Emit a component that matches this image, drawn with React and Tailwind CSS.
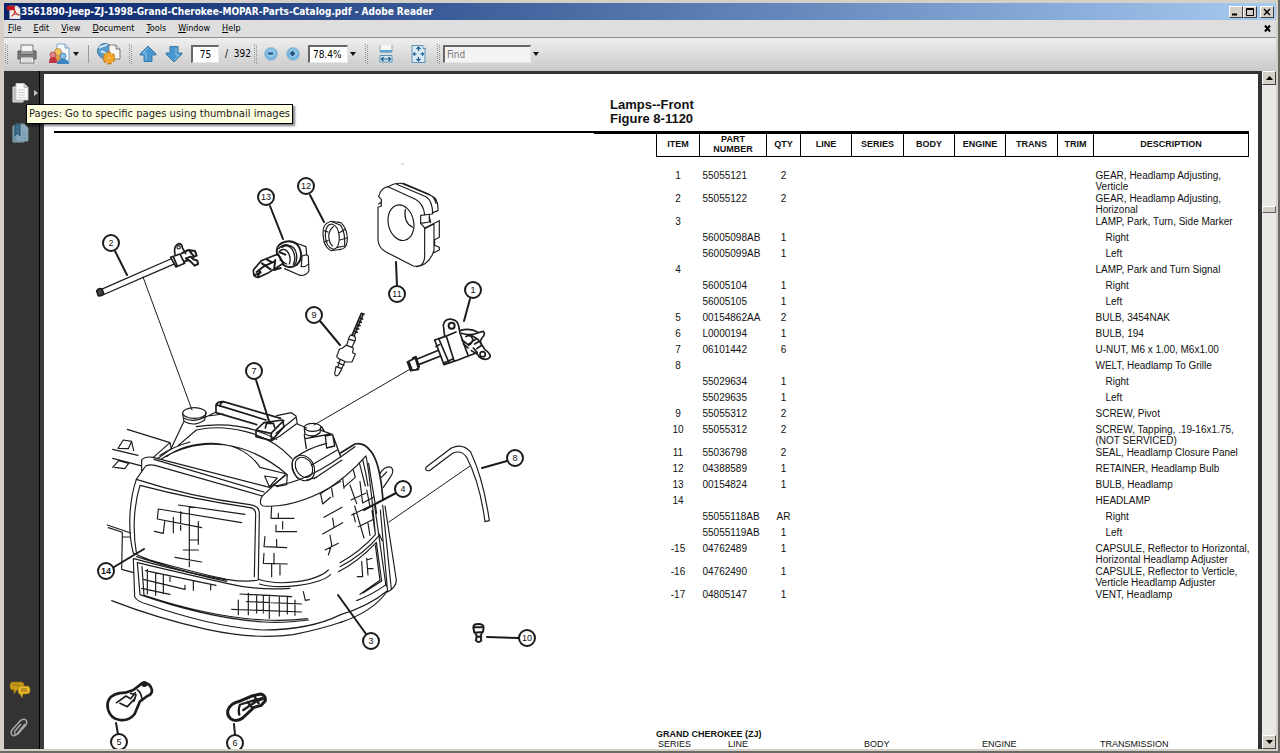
import React, { useState } from 'react';

const FILE_NAME = '3561890-Jeep-ZJ-1998-Grand-Cherokee-MOPAR-Parts-Catalog.pdf';
const TOTAL_PAGES = 392;

const menus = ['File', 'Edit', 'View', 'Document', 'Tools', 'Window', 'Help'];

const columns = [
  { label: 'ITEM', width: 'w-[43px]' },
  { label: 'PART NUMBER', width: 'w-[67px]' },
  { label: 'QTY', width: 'w-[34px]' },
  { label: 'LINE', width: 'w-[51px]' },
  { label: 'SERIES', width: 'w-[52px]' },
  { label: 'BODY', width: 'w-[51px]' },
  { label: 'ENGINE', width: 'w-[51px]' },
  { label: 'TRANS', width: 'w-[52px]' },
  { label: 'TRIM', width: 'w-[36px]' },
  { label: 'DESCRIPTION', width: '' },
];

// item, part number, qty, description lines, indented
const parts = [
  ['1', '55055121', '2', ['GEAR, Headlamp Adjusting,', 'Verticle']],
  ['2', '55055122', '2', ['GEAR, Headlamp Adjusting,', 'Horizonal']],
  ['3', '', '', ['LAMP, Park, Turn, Side Marker']],
  ['', '56005098AB', '1', ['Right'], true],
  ['', '56005099AB', '1', ['Left'], true],
  ['4', '', '', ['LAMP, Park and Turn Signal']],
  ['', '56005104', '1', ['Right'], true],
  ['', '56005105', '1', ['Left'], true],
  ['5', '00154862AA', '2', ['BULB, 3454NAK']],
  ['6', 'L0000194', '1', ['BULB, 194']],
  ['7', '06101442', '6', ['U-NUT, M6 x 1.00, M6x1.00']],
  ['8', '', '', ['WELT, Headlamp To Grille']],
  ['', '55029634', '1', ['Right'], true],
  ['', '55029635', '1', ['Left'], true],
  ['9', '55055312', '2', ['SCREW, Pivot']],
  ['10', '55055312', '2', ['SCREW, Tapping, .19-16x1.75,', '(NOT SERVICED)']],
  ['11', '55036798', '2', ['SEAL, Headlamp Closure Panel']],
  ['12', '04388589', '1', ['RETAINER, Headlamp Bulb']],
  ['13', '00154824', '1', ['BULB, Headlamp']],
  ['14', '', '', ['HEADLAMP']],
  ['', '55055118AB', 'AR', ['Right'], true],
  ['', '55055119AB', '1', ['Left'], true],
  ['-15', '04762489', '1', ['CAPSULE, Reflector to Horizontal,', 'Horizontal Headlamp Adjuster']],
  ['-16', '04762490', '1', ['CAPSULE, Reflector to Verticle,', 'Verticle Headlamp Adjuster']],
  ['-17', '04805147', '1', ['VENT, Headlamp']],
];

// number, centre x, centre y, leader line
const callouts = [
  ['2', 111, 243, 'M115 251L127 275'],
  ['13', 266, 197, 'M270 206L283 239'],
  ['12', 306, 186, 'M310 195L324 222'],
  ['11', 397, 294, 'M396 262L397 286'],
  ['1', 473, 290, 'M470 299L464 321'],
  ['9', 314, 315, 'M320 321L340 345'],
  ['7', 254, 371, 'M256 380L269 421'],
  ['8', 515, 458, 'M482 468L507 461'],
  ['4', 403, 489, 'M364 510L396 493'],
  ['14', 106, 571, 'M114 567L144 549'],
  ['3', 371, 641, 'M338 595L366 634'],
  ['10', 527, 638, 'M487 637L519 638'],
  ['5', 119, 742, 'M116 723L118 734'],
  ['6', 235, 743, 'M234 724L235 735'],
];

function Grip() {
  return (
    <svg className="h-5 w-1 shrink-0" viewBox="0 0 4 20" aria-hidden="true">
      <path d="M.5 0v20M2.500 1v19" stroke="#8f8f8f" strokeDasharray="1 1" />
    </svg>
  );
}

function DownArrow() {
  return (
    <svg className="h-1 w-[7px] shrink-0" viewBox="0 0 7 4" aria-hidden="true">
      <path d="M0 0h6L3 4z" fill="#111" />
    </svg>
  );
}

function PdfIcon() {
  return (
    <svg className="h-[14px] w-[14px] shrink-0" viewBox="0 0 16 16" aria-hidden="true">
      <path d="M3 1h9l3 3v12H3z" fill="#f4f1f1" stroke="#b9b4b4" strokeWidth=".6" />
      <path d="M12 1v3h3z" fill="#c9c4c4" />
      <path d="M0 1h9v5H0z" fill="#c8151b" />
      <path d="M5 13c3-2 4-5 4-7.500M6 12c2-2 5-2 8-1M9 7c1 3 3 4 5 5" fill="none" stroke="#d42a2a" strokeWidth="1.200" />
    </svg>
  );
}

function PrinterIcon() {
  return (
    <svg className="h-5 w-5" viewBox="0 0 20 20">
      <path d="M4 1h12v7H4z" fill="#f2f2f2" stroke="#777" />
      <path d="M1 7h3v3h12V7h3v8H1z" fill="#7a7a7a" stroke="#555" />
      <path d="M4 7h12v3H4z" fill="#9b9b9b" />
      <path d="M4 13h12l1 6H3z" fill="#fff" stroke="#777" />
      <path d="M5 15h10M5 17h10" stroke="#bbb" />
    </svg>
  );
}

function ShareIcon() {
  return (
    <svg className="h-[22px] w-[22px]" viewBox="0 0 22 22">
      <path d="M8 1h8l4 4v14H8z" fill="#f5f8fb" stroke="#7fa3c4" />
      <path d="M16 1v4h4" fill="#cfdfee" stroke="#7fa3c4" />
      <circle cx="9" cy="9" r="3.500" fill="#f2c65c" stroke="#b5762b" strokeWidth=".7" />
      <path d="M5 19c0-5 1-7 4-7s5 2 5 7z" fill="#e29b45" />
      <circle cx="4" cy="12" r="3" fill="#e58a86" stroke="#a2373f" strokeWidth=".7" />
      <path d="M0 20c0-4 1-6 4-6s4 2 4 6z" fill="#bf3445" />
      <circle cx="14" cy="13" r="3" fill="#8fc4ea" stroke="#2a6aa5" strokeWidth=".7" />
      <path d="M8 21c0-3 2-5 6-5s6 2 6 5z" fill="#3b85c0" />
    </svg>
  );
}

function OnlineIcon() {
  return (
    <svg className="h-[22px] w-6" viewBox="0 0 24 22">
      <circle cx="8" cy="8" r="7.500" fill="#5a9bd0" stroke="#356f9f" />
      <path d="M2 5c3-3 6-1 8-4M4 9c2-1 4 0 5 3l-2 3" fill="none" stroke="#cfe6f7" strokeWidth="2" />
      <path d="M12 2h7l4 4v10H12z" fill="#f7f7f7" stroke="#777" />
      <path d="M19 2v4h4" fill="#ddd" stroke="#777" />
      <circle cx="12" cy="15" r="4" fill="none" stroke="#c9811c" strokeWidth="5" strokeDasharray="3 1.200" />
      <circle cx="12" cy="15" r="3" fill="#fbd07a" stroke="#f2a62c" strokeWidth="4" />
    </svg>
  );
}

function PageArrow({ down }) {
  return (
    <svg className={`h-[18px] w-[18px] ${down ? 'rotate-180' : ''}`} viewBox="0 0 18 18">
      <path d="M9 1l8 8v1h-4v6.500H5V10H1V9z" fill="#4a97cf" stroke="#3a7ba8" strokeLinejoin="round" />
      <path d="M9 2.500L4 8h3v7" fill="none" stroke="#8cc4ea" />
    </svg>
  );
}

function ZoomIcon({ plus }) {
  return (
    <svg className="h-[14px] w-[14px]" viewBox="0 0 14 14">
      <circle cx="7" cy="7" r="6.500" fill="#77b5df" stroke="#a5bfd1" />
      <circle cx="7" cy="6" r="4" fill="#93c8ea" />
      <path d={plus ? 'M4 6.500h5M6.500 4v5' : 'M4 6.500h5'} stroke="#1d4f7a" strokeWidth="2" />
    </svg>
  );
}

function FitWidthIcon() {
  return (
    <svg className="h-[18px] w-4" viewBox="0 0 16 18">
      <path d="M1 0v7h12V0" fill="#f4f8fb" stroke="#8da6b8" />
      <path d="M1 5h12v2.500H1z" fill="#5fa3cf" />
      <path d="M1 10.500h12V17H1z" fill="#d5e8f4" stroke="#5f93b6" />
      <path d="M2.500 14h9M4.500 12l-2 2 2 2M9.500 12l2 2-2 2" fill="none" stroke="#1c5c8c" strokeWidth="1.200" />
    </svg>
  );
}

function FitPageIcon() {
  return (
    <svg className="h-[18px] w-4" viewBox="0 0 16 18">
      <path d="M1 .5h11l2 2v15H1z" fill="#d9eaf5" stroke="#5f93b6" />
      <path d="M12 .5v3h3" fill="#fff" stroke="#5f93b6" />
      <path d="M7.500 6V2M5.500 4l2-2 2 2M7.500 12v4M5.500 14l2 2 2-2M5.500 9h-3M4 7.500L2.500 9 4 10.500M9.500 9h3M11 7.500L12.500 9 11 10.500" fill="none" stroke="#1c5c8c" strokeWidth="1.200" />
    </svg>
  );
}

function ToolButton({ label, children }) {
  return (
    <button type="button" aria-label={label} className="flex shrink-0 items-center justify-center">
      {children}
    </button>
  );
}

function CaptionButton({ label, children }) {
  return (
    <button
      type="button"
      aria-label={label}
      className="flex h-3 w-[14px] items-center justify-center border border-t-white border-l-white border-r-[#404040] border-b-[#404040] bg-[#d4d0c8]"
    >
      <svg className="h-2 w-[10px]" viewBox="0 0 10 8" fill="none" stroke="#000">
        {children}
      </svg>
    </button>
  );
}

function TitleBar() {
  return (
    <header className="flex h-[17px] shrink-0 items-center bg-linear-to-r from-[#0a246a] to-[#a6caf0] pr-[2px] pl-[3px]">
      <PdfIcon />
      <h1 className="flex-1 truncate text-[10px] font-bold text-white">{FILE_NAME} - Adobe Reader</h1>
      <div className="flex items-center">
        <CaptionButton label="Minimize">
          <path d="M1 6.500h5" strokeWidth="2" />
        </CaptionButton>
        <CaptionButton label="Restore">
          <path d="M1.500 .5h7v7h-7zM1.500 1.500h7" />
        </CaptionButton>
        <span className="w-[3px]" />
        <CaptionButton label="Close">
          <path d="M2 1l6 6M8 1L2 7" strokeWidth="1.500" />
        </CaptionButton>
      </div>
    </header>
  );
}

function MenuBar() {
  return (
    <nav className="flex h-[18px] shrink-0 items-center gap-3 border-b border-[#8e8e8e] bg-[#dedede] pr-[5px] pl-1 text-[9px] text-black">
      {menus.map((name) => (
        <button key={name} type="button">
          <span className="underline">{name[0]}</span>
          {name.slice(1)}
        </button>
      ))}
      <button type="button" aria-label="Close document" className="ml-auto">
        <svg className="h-[7px] w-[7px]" viewBox="0 0 7 7">
          <path d="M1 .5l5 6M6 .5l-5 6" stroke="#000" strokeWidth="2" />
        </svg>
      </button>
    </nav>
  );
}

function Toolbar() {
  const [page, setPage] = useState('75');
  const [query, setQuery] = useState('');
  const field = 'h-[18px] shrink-0 rounded-none border-t-2 border-l-2 border-r border-b border-t-[#666] border-l-[#666] border-r-[#e8e8e8] border-b-[#e8e8e8] text-black outline-none';

  return (
    <div className="flex h-[33px] shrink-0 items-center bg-linear-to-b from-[#efefef] to-[#c9c9c9] pb-[2px] pl-px text-[10px] text-black">
      <Grip />
      <div className="ml-2 flex items-center gap-3">
        <ToolButton label="Print"><PrinterIcon /></ToolButton>
        <ToolButton label="Collaborate">
          <ShareIcon />
          <span className="ml-[2px]"><DownArrow /></span>
        </ToolButton>
      </div>
      <span className="mx-2 h-[18px] w-px bg-[#9a9a9a]" />
      <ToolButton label="Work online"><OnlineIcon /></ToolButton>
      <div className="ml-2 flex items-center"><Grip /></div>
      <div className="ml-[6px] flex items-center gap-2">
        <ToolButton label="Previous page"><PageArrow /></ToolButton>
        <ToolButton label="Next page"><PageArrow down /></ToolButton>
        <input
          aria-label="Page number"
          value={page}
          onChange={(e) => setPage(e.target.value)}
          className={`${field} w-7 bg-white text-center`}
        />
      </div>
      <span className="mr-[3px] ml-[6px] shrink-0 whitespace-pre">/  {TOTAL_PAGES}</span>
      <Grip />
      <div className="ml-[6px] flex items-center gap-2">
        <ToolButton label="Zoom out"><ZoomIcon /></ToolButton>
        <ToolButton label="Zoom in"><ZoomIcon plus /></ToolButton>
        <label className="flex items-center gap-[2px]">
          <select aria-label="Zoom level" className={`${field} w-10 appearance-none bg-white pl-[3px]`}>
            <option>78.4%</option>
          </select>
          <DownArrow />
        </label>
      </div>
      <div className="ml-2 flex items-center"><Grip /></div>
      <div className="mx-[10px] flex items-center gap-4">
        <ToolButton label="Fit width"><FitWidthIcon /></ToolButton>
        <ToolButton label="Fit page"><FitPageIcon /></ToolButton>
      </div>
      <Grip />
      <div className="ml-[2px] flex items-center gap-[2px]">
        <input
          aria-label="Find"
          placeholder="Find"
          value={query}
          onChange={(e) => setQuery(e.target.value)}
          className={`${field} w-[88px] bg-[#f3f3f3] pl-[2px] placeholder:text-[#777]`}
        />
        <ToolButton label="Find options"><DownArrow /></ToolButton>
      </div>
    </div>
  );
}

function SidePanel() {
  return (
    <aside className="relative flex w-10 shrink-0 flex-col border-r-4 border-[#3a3a3a] bg-[#333]">
      <div className="flex flex-1 flex-col items-start gap-[18px] border-r border-black pt-[12px] pb-[10px] pl-[5px]">
        <div className="flex flex-col items-start gap-5 pl-[3px]">
          <button type="button" aria-label="Pages" aria-describedby="pages-tip" className="flex items-center gap-1">
            <svg className="h-5 w-[18px]" viewBox="0 0 18 20">
              <path d="M1 4h10v15H1z" fill="#b9b9b9" stroke="#e6e6e6" />
              <path d="M4 .5h8l4 4V17H4z" fill="#fafafa" stroke="#c9c9c9" />
              <path d="M12 .5v4h4" fill="#d5d5d5" stroke="#bbb" />
              <path d="M6 7h7M6 9.500h7M6 12h7M6 14.500h7" stroke="#cdcdcd" />
            </svg>
            <svg className="h-[6px] w-1" viewBox="0 0 4 6"><path d="M0 0l4 3-4 3z" fill="#c8c8c8" /></svg>
          </button>
          <button type="button" aria-label="Bookmarks">
            <svg className="h-5 w-[18px]" viewBox="0 0 18 20">
              <path d="M1 3h11v16H1z" fill="#6d8fa3" stroke="#86a6b8" />
              <path d="M4 1h8l4 4v13H4z" fill="#88a9bb" stroke="#7896a8" />
              <path d="M3 1h5v12l-2.500-3L3 13z" fill="#3f6d8c" stroke="#2c5069" />
              <path d="M10 9h4M10 12h4M8 15h6" stroke="#6d8fa3" />
            </svg>
          </button>
        </div>
        <button type="button" aria-label="Comments" className="mt-auto">
          <svg className="h-[18px] w-[22px]" viewBox="0 0 22 18">
            <path d="M4 1h8q3 0 3 3v2q0 3-3 3H8l-3 4 0-4H4Q1 9 1 6V4q0-3 3-3z" fill="#c79a1c" stroke="#8d6b0d" strokeWidth=".6" />
            <path d="M12 5h6q3 0 3 3v2q0 3-3 3h-4l-1 4-2-4Q9 13 9 10V8q0-3 3-3z" fill="#e8b92e" stroke="#8d6b0d" strokeWidth=".6" />
            <path d="M4 4h6M12 8h6M12 10h6" stroke="#8d6b0d" />
          </svg>
        </button>
        <button type="button" aria-label="Attachments">
          <svg className="h-[22px] w-[22px]" viewBox="2 0 22 22" fill="none" stroke="#a9a9a9" strokeWidth="1.500">
            <path d="M18 7l-8 10q-3 3-5 1-2-2 0-5l8-9q3-3 6-1 2 3-1 6l-7 8q-2 1-3 0-1-1 0-3l6-7" />
          </svg>
        </button>
      </div>
      <div
        id="pages-tip"
        role="tooltip"
        className="absolute top-[33px] left-[22px] z-10 border border-black bg-[#ffffe1] px-[2px] py-[2px] font-['DejaVu_Sans',sans-serif] text-[10px] leading-[14px] whitespace-nowrap text-[#222] shadow-[2px_2px_2px_rgba(0,0,0,0.5)]"
      >
        Pages: Go to specific pages using thumbnail images
      </div>
    </aside>
  );
}

// Exploded view of the front lamps
function LampDrawing() {
  return (
    <svg
      className="h-[615px] w-[602px] shrink-0"
      viewBox="54 134 602 615"
      fill="none"
      stroke="#1c1c1c"
      strokeLinecap="round"
      strokeLinejoin="round"
      role="img"
      aria-label="Front lamps exploded view"
    >
      <path d="M143 277L192 410M412 368L314 425M389 522L470 466" />
      <path d="M402 164h1" stroke="#999" />

      {/* long adjuster gear and headlamp bulb */}
      <g transform="translate(80 160) scale(.3333)" strokeWidth="3.500">
        <path d="M64 388L272 297M68 405L280 313" strokeWidth="4" />
        <path d="M50 393q5-10 16-6l5 14q-6 9-16 6z" fill="#444" strokeWidth="5" />
        <path d="M272 292l28-10 14 28-26 11zM280 290l12 28M285 283q-5-25 10-32 12 0 12 12l10 18" strokeWidth="5" />
        <circle cx="296" cy="262" r="5" />
        <path d="M305 280l20-10 20 3 5 14-15 6M318 295l14-5 8 8 12 4 2 10-10 5-12-12zM330 275l10 12M312 305l14-5" strokeWidth="6" />
        <path d="M592 285q-8-32 24-40 30-6 42 18 14 30-8 52-24 14-42-2" strokeWidth="6" />
        <path d="M606 262q20-12 32 8 12 24 2 44M616 256q28-4 34 28 2 20-6 32M600 272q16-10 26 8 8 18 2 32M596 266q16-16 30-10M600 300l20 12" strokeWidth="4" />
        <path d="M640 248l16 4 22 8 2 24-14 4M679 284l6 4 2 44q-8 16-28 14l-45-20M666 288l-2 32M650 250l-22-6M663 320q14 2 22-8" />
        <path d="M520 330l24-28 50-20 16 28-44 28-30 14q-16 2-16-22z" strokeWidth="5" />
        <path d="M530 336l20-16 34-16M522 346l20-8M546 310l26 18M560 298l14 8M596 286l14 24M586 300l-4 30 20-6M598 276l18 8M534 350l6-16" strokeWidth="6" />
      </g>

      {/* retainer, closure seal, pivot screw and short adjuster */}
      <g transform="translate(300 160) scale(.3333)" strokeWidth="3.500">
        <path d="M70 230q-6-40 24-46l28 4q18 14 20 46 0 32-20 34l-28 4q-22-10-24-42z" strokeDasharray="16 3" />
        <path d="M76 228q0-36 20-36 20 6 22 40 0 34-18 36-22-6-24-40z" />
        <path d="M100 200q-12 8-14 28 2 24 12 30M118 218l18-10M120 240l20-6M112 262l22-4M98 186l24 10q14 20 12 60M72 212l12 4M72 246l12-4" />
        <path d="M236 110Q242 84 264 80L346 118Q370 130 374 164M236 110l8 8v20l-10 4V240Q236 264 258 276L340 318Q372 324 374 290V206M244 126l-8 6" />
        <path d="M264 80Q286 68 304 70L396 108Q416 118 414 152L398 158M290 73L378 110Q398 122 398 162M310 70l76 32Q404 110 408 130M350 320Q382 316 396 286L402 272V192M362 166l34-4M362 166v24l12 14 44-22M362 190l26-4v-20M388 170l4 18M418 182v50l-16 8M404 242v14l14 6v8l-16 8M374 206l28-14" />
        <ellipse cx="303" cy="188" rx="38" ry="54" transform="rotate(-12 303 188)" />
        <path d="M316 148q-6 40 22 54" />
        <path d="M190 462l-28 66M184 460l-28 66M184 460l8 2M180 474l8 3M176 484l8 3M172 494l8 3M168 504l8 3M164 514l8 3" strokeWidth="5" />
        <path d="M154 524q14 2 12 16l-10 22-16-6 8-26zM148 538l14 4M138 556l22 8-2 14 8 4-10 24-18 0-22-10-6-6 8-22 10-4zM120 600l-6 20M134 606l-8 18M112 608l20 8M108 620l18 6-10 18q-10 8-12-2z" />
        <path d="M434 530l-4-36q6-20 26-16 18 4 20 20l4 22 24 66M404 540l30-10 34-14M404 540l28 74 42-14 52-20M418 540l28 66M440 532l22 70M408 560l10-6M430 610l30-14" strokeWidth="5" />
        <circle cx="455" cy="497" r="9" strokeWidth="6" />
        <path d="M480 512q30-10 56 6l14-4q8 8-4 20l-6 12 14 22q20 14 16 24-8 10-24 4-10-4-12-12l-20-12M484 520q24 8 48 0M486 540l18 14 26-18M498 530q12-8 20 6 0 14-12 20M524 552l14-8q10 6 4 14l-12 8M512 524l24 16M490 552l14 12M520 564l12 14" strokeWidth="5" />
        <circle cx="548" cy="583" r="8" strokeWidth="5" />
        <path d="M350 598l62-26M356 614l66-26M322 606l24-12 10 34-24 4zM338 594l10-4 10 30-8 8M328 608l8 22" strokeWidth="5" />
      </g>

      {/* headlamp housing and lenses */}
      <g transform="translate(90 380) scale(.3333)" strokeWidth="3.500">
        <ellipse cx="313" cy="99" rx="35" ry="16" />
        <path d="M278 102l4 22q30 18 62-4l4-22M280 114q32 16 66-4M282 124l-39 82M346 112l32-16M354 108l46-6" />
        <path d="M378 98V74q6-10 22-9l172 50M378 74l150 46M378 98l122 36M400 65q-10 4-10 14" strokeWidth="5" />
        <path d="M498 150l24-22 56-8 4 20-37 42-47-12zM498 150l45 10 38-38M543 160l2 22M526 144l4-14h20l4 12" strokeWidth="5" />
        <path d="M560 107l44-9 14 10 4 22-52 38-25 14M618 112l-60 48M622 132l28 12" />
        <ellipse cx="668" cy="142" rx="25" ry="12" />
        <path d="M643 146l2 16q24 14 45-4l2-14M643 165l6 40M690 150l38 14 24 66M646 176l76-14M706 168l22-4 6 34-24 6zM695 140l8 14" strokeWidth="4" />
        <ellipse cx="642" cy="262" rx="24" ry="32" transform="rotate(-30 642 262)" />
        <ellipse cx="640" cy="264" rx="32" ry="40" transform="rotate(-30 640 264)" />
        <path d="M614 234q40-30 96-44M664 256l78-46M672 296l84-56M650 300l30-8" />
        <path d="M215 236C330 165 470 180 592 284M230 230C290 182 440 160 510 262l80 20M265 196l54-46C400 132 530 150 606 236M319 140C400 128 480 134 560 178M592 284l-2 30-30 6M608 240q-6 30 16 56M210 226q40-26 90-40M524 288l38 6-24 26zM540 322l50-38" />
        <path d="M112 148l128 40 4 18-42 30M240 188l-50 44M68 208l76 18M68 235l84 22M84 205l16-25 25 4-10 22zM125 186l6 26M68 262l18-20 30 8-12 16-30-4" />
        <path d="M155 276v-36q10-12 34-8l350 90M192 238l330 98M139 298l28-40q12-6 28-2l322 92" />
        <path d="M139 298C118 360 112 450 130 520M150 316C130 380 128 460 140 524M139 298q160 52 340 76 30 4 29 26l-3 198M150 316q160 42 326 66 22 2 21 22l-4 186M130 520l50 20q150 42 230 58 60 10 94 2M140 530q160 52 270 74" />
        <path d="M265 375l200 28M205 387l250 41M205 387l-3 30 133 26M224 425l-4 35-27-6M250 412v46M272 395v56M298 380v180M325 425v68M298 480h27M280 510h45M255 532l80 14" />
        <path d="M515 350q-10 24 5 28C600 384 680 350 752 304M515 350l70-65M540 318C620 315 700 270 795 200" />
        <path d="M505 598C570 620 680 604 715 570M508 612C570 630 690 614 722 584M545 380l-2 35h69M565 400v15M558 435v20h62M578 425v22M525 470l-3 30 68 3M560 478v24M522 520l-2 30 72 2M552 520v32M545 552v38M570 555v30" />
        <path d="M130 536l4 114q6 15 36 22 200 70 350 78c100 0 180-20 232-46M142 548l8 96q200 70 370 82 60 4 136-6M142 548q160 38 268 62 90 22 190 15M132 536q160 44 280 64M156 560l6 86q200 66 360 74 70 4 130-4" />
        <path d="M166 572l212 44M160 598l125 30v-12M155 625l85 18M172 568v74M197 580v66M220 585v56M240 590v14M310 605v26M362 612v18M450 642l155 8M470 665l165 7M425 688l210 8M445 660v44M475 640v64M500 645v54M520 645v54M538 645v70M568 648v60M592 652v50M615 660v46M640 635l6 26 12-2" />
        <path d="M65 662Q200 715 350 748q150 32 260 16 80-16 145-38" />
        <path d="M52 435l70 24M55 443l42 14v14h24M97 470l-2 98 36 10" />
      </g>

      {/* turn lamp edge, welt and tapping screw */}
      <g transform="translate(320 380) scale(.3333)" strokeWidth="3.500">
        <path d="M60 220L105 192q26-6 46 20 24 28 34 108l4 40" strokeWidth="5" />
        <path d="M195 378l34 222q0 22-26 36l-22-246M188 376l26 252M164 378l34 240M178 462l8 20" />
        <path d="M0 342C50 312 100 272 138 228q12 60 28 234M128 238q10 40 16 80M118 248l18 70M146 250l24 150M156 392l10 70" />
        <path d="M180 280q16-24 34-18 10 10-2 28l-22 32M184 292l16-16" />
        <path d="M60 548q60-32 106-84M60 560q70-36 118-94M55 575q60-30 114-88l16 116-56 36M166 495l14 106-60 42M110 662q50-20 88-48" />
        <path d="M2 342l6 30 24-20M35 325l4 26M68 295l4 30M100 270l6 22-32 28M12 412l54-30M8 462l60-34M38 415l4 26M15 510l40-20M30 465l5 30-10 30M90 315l20 56M93 360l44-20M120 305l8 64 34-18M95 405l50-24M104 378l28 96M115 440l46-22M144 430l6 36M100 400l6 26M140 330l10 50M125 545l3 45h-16M140 535l4 50M140 540l16-5M143 566h16" />
        <path d="M318 262l76-58q34-16 58 12 38 80 56 206l-13 3Q480 310 440 232q-16-24-42-12l-70 52q-14 2-10-10z" />
        <path d="M62 704Q144 680 200 634" />
        <path d="M60 728c60-20 110-50 140-92" />
        <path d="M460 742q0-10 15-10t16 10l-2 14-26 2zM465 742h20M466 758l4 10-2 14q8 8 16 0l-2-14 4-10M470 770h14" strokeWidth="6" />
      </g>

      {/* small bulbs */}
      <g transform="translate(0 640) scale(.3333)" strokeWidth="8">
        <path d="M326 180q12-22 50-22l24-8 26-20q24-4 30 20 0 14-14 18l-22 16-16 38q-18 22-44 18-28-4-36-32-4-16 2-28z" />
        <path d="M412 150q12 6 14 30M350 188l28-20 14 8 14-18M360 190l22 10 24-26M392 160l16 4-6 20" strokeWidth="5" />
        <circle cx="433" cy="132" r="5" fill="#111" />
        <path d="M684 210q8-20 34-26l38-16 26-6q16 4 14 20l-12 14-22 6-34 32q-18 14-36 2-12-10-8-26z" strokeWidth="9" />
        <path d="M720 194q-6 14-2 30M730 210l36-24 24-10M726 192l60-18M742 186l14 16M764 170l12 20" strokeWidth="7" />
      </g>

      {callouts.map(([num, cx, cy, leader]) => (
        <g key={num}>
          <path d={leader} strokeWidth="2" />
          <circle cx={cx} cy={cy} r="8" fill="#fff" strokeWidth="2" />
          <text
            x={cx}
            y={cy + 3}
            textAnchor="middle"
            stroke="none"
            fill="#111"
            className={`font-['Liberation_Sans',Arial,sans-serif] text-[9px] ${num === '14' ? 'font-bold' : ''}`}
          >
            {num}
          </text>
        </g>
      ))}
    </svg>
  );
}

function PartsTable() {
  return (
    <table className="w-full table-fixed border-collapse text-[10px] leading-[11px]">
      <colgroup>
        {columns.map((col) => <col key={col.label} className={col.width} />)}
      </colgroup>
      <thead>
        <tr className="text-[9px] leading-[10px]">
          {columns.map((col) => (
            <th key={col.label} scope="col" className="border border-t-0 border-black p-0 px-1 pb-[2px] text-center align-middle">
              {col.label}
            </th>
          ))}
        </tr>
      </thead>
      <tbody className="before:block before:h-3">
        {parts.map(([item, number, qty, lines, indent], i) => (
          <tr key={i} className={lines.length > 1 ? 'h-[23px]' : 'h-4'}>
            <td className="p-0 pt-px text-center align-top">{item}</td>
            <td className="p-0 pt-px pl-[3px] align-top">{number}</td>
            <td className="p-0 pt-px text-center align-top">{qty}</td>
            <td colSpan={6} />
            <td className={`p-0 pt-px align-top whitespace-pre ${indent ? 'pl-3' : 'pl-[2px]'}`}>
              {lines.map((line) => <div key={line}>{line}</div>)}
            </td>
          </tr>
        ))}
      </tbody>
    </table>
  );
}

function CatalogPage() {
  return (
    <main className="min-w-0 flex-1 overflow-hidden bg-white pr-[9px] pl-[10px] font-['Liberation_Sans',Arial,sans-serif] text-[#111]">
      <div className="flex h-full flex-col">
        <h2 className="shrink-0 pt-6 pb-[5px] pl-[556px] text-[13px] leading-[14px] font-bold">
          Lamps--Front
          <br />
          Figure 8-1120
        </h2>
        <div className="flex h-[3px] shrink-0 items-start">
          <span className="h-[2px] w-[540px] bg-black" />
          <span className="h-[3px] flex-1 bg-black" />
        </div>
        <div className="flex min-h-0 flex-1">
          <LampDrawing />
          <section className="flex min-w-0 flex-1 flex-col">
            <PartsTable />
            <div className="mt-auto text-[9px] leading-[10px]">
              <h3 className="font-bold">GRAND CHEROKEE (ZJ)</h3>
              <div className="flex pl-[2px]">
                <span className="w-[70px]">SERIES</span>
                <span className="w-[136px]">LINE</span>
                <span className="w-[118px]">BODY</span>
                <span className="w-[118px]">ENGINE</span>
                <span>TRANSMISSION</span>
              </div>
            </div>
          </section>
        </div>
      </div>
    </main>
  );
}

function ScrollButton({ label, down }) {
  return (
    <button
      type="button"
      aria-label={label}
      className="flex h-[14px] shrink-0 items-center justify-center border border-t-white border-l-white border-r-[#404040] border-b-[#404040] bg-[#d4d0c8]"
    >
      <svg className="h-1 w-[7px]" viewBox="0 0 7 4">
        <path d={down ? 'M0 0h7L3.500 4z' : 'M0 4h7L3.500 0z'} />
      </svg>
    </button>
  );
}

function VerticalScrollbar({ page }) {
  return (
    <div className="flex w-[18px] shrink-0 flex-col border-l-4 border-[#333] bg-[#eae8e4]">
      <ScrollButton label="Scroll up" />
      <div className="flex flex-1 flex-col">
        <span style={{ height: `${((page - 2) / TOTAL_PAGES) * 100}%` }} />
        <span className="h-[7px] border border-t-white border-l-white border-r-[#606060] border-b-[#606060] bg-[#d4d0c8]" />
      </div>
      <ScrollButton label="Scroll down" down />
    </div>
  );
}

export default function App() {
  return (
    <div className="h-screen border-r-2 border-b-2 border-[#6b6965] font-['DejaVu_Sans_Condensed','DejaVu_Sans',sans-serif]">
      <div className="flex h-full flex-col overflow-hidden border-t-[3px] border-r-2 border-b-2 border-l-4 border-[#d4d0c8] bg-[#333]">
        <TitleBar />
        <MenuBar />
        <Toolbar />
        <div className="flex min-h-0 flex-1">
          <SidePanel />
          <div className="flex min-w-0 flex-1 border-t-[3px] border-[#333]">
            <CatalogPage />
          </div>
          <VerticalScrollbar page={75} />
        </div>
      </div>
    </div>
  );
}
